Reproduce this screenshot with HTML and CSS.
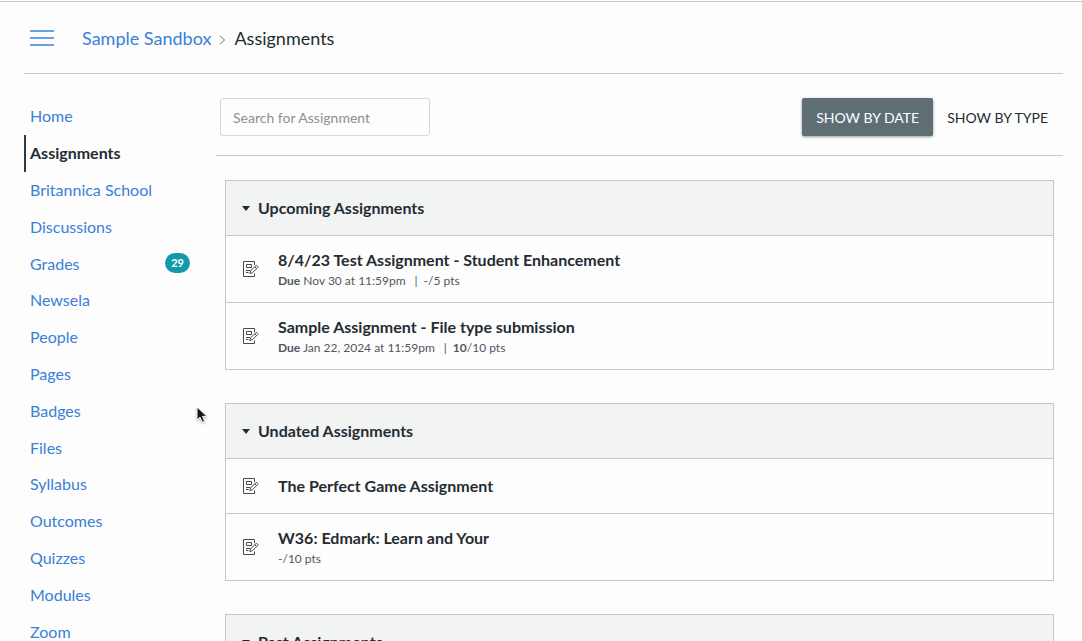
FILE: index.html
```
<!DOCTYPE html>
<html lang="en">
<head>
    <meta charset="UTF-8">
    <title>Sample Sandbox Assignments</title>
    <meta name="viewport" content="width=device-width, initial-scale=1.0">
    <link rel="stylesheet" href="styles.css">
</head>
<body>
    <!-- Shared icons -->
    <svg class="sprite" aria-hidden="true">
        <symbol id="icon-assignment" viewBox="0 0 17 16">
            <g fill="none" stroke="currentColor" stroke-width="1">
                <path d="M12.5 4V.5h-11v15h11V12.5"/>
                <path d="M4.5 3.5h5v3h-5zM4 9.5h4.500M4 11.5h2.500"/>
                <path d="M7.800 12.500l.8-2.700 5.300-5.100q.7-.6 1.400.1l.4.400q.6.7-.1 1.400l-5.200 5.200zM12.800 5.800l1.900 1.900"/>
            </g>
        </symbol>
    </svg>

    <!-- Breadcrumb header -->
    <header class="header">
        <button class="menu-button" type="button" aria-label="Toggle course navigation">
            <svg width="24" height="18" viewBox="0 0 24 18">
                <path d="M0 2h24M0 9h24M0 16h24" stroke="currentColor" stroke-width="1.5"/>
            </svg>
        </button>
        <nav class="breadcrumbs" aria-label="Breadcrumb">
            <a href="#">Sample Sandbox</a>
            <svg class="chevron" width="7" height="10" viewBox="0 0 7 10">
                <path d="M1 .8l4.600 4.200L1 9.200" fill="none" stroke="currentColor"/>
            </svg>
            <span>Assignments</span>
        </nav>
    </header>

    <div class="layout">
        <!-- Course navigation -->
        <nav class="course-nav" aria-label="Course">
            <a href="#">Home</a>
            <a href="#" class="active">Assignments</a>
            <a href="#">Britannica School</a>
            <a href="#">Discussions</a>
            <a href="#">Grades <span class="badge">29</span></a>
            <a href="#">Newsela</a>
            <a href="#">People</a>
            <a href="#">Pages</a>
            <a href="#">Badges</a>
            <a href="#">Files</a>
            <a href="#">Syllabus</a>
            <a href="#">Outcomes</a>
            <a href="#">Quizzes</a>
            <a href="#">Modules</a>
            <a href="#">Zoom</a>
        </nav>

        <main class="content">
            <div class="toolbar">
                <input class="search" type="text" placeholder="Search for Assignment" aria-label="Search for Assignment">
                <div class="view-toggle">
                    <button class="selected" type="button">SHOW BY DATE</button>
                    <button type="button">SHOW BY TYPE</button>
                </div>
            </div>

            <!-- Assignment groups -->
            <div class="groups">
                <section class="group">
                    <h2><button class="group-toggle" type="button">Upcoming Assignments</button></h2>
                    <ul>
                        <li>
                            <svg class="icon"><use href="#icon-assignment"/></svg>
                            <div>
                                <a href="#" class="title">8/4/23 Test Assignment - Student Enhancement</a>
                                <div class="meta"><span><b>Due</b> Nov 30 at 11:59pm</span><span class="score">-/5 pts</span></div>
                            </div>
                        </li>
                        <li>
                            <svg class="icon"><use href="#icon-assignment"/></svg>
                            <div>
                                <a href="#" class="title">Sample Assignment - File type submission</a>
                                <div class="meta"><span><b>Due</b> Jan 22, 2024 at 11:59pm</span><span class="score"><b>10</b>/10 pts</span></div>
                            </div>
                        </li>
                    </ul>
                </section>

                <section class="group">
                    <h2><button class="group-toggle" type="button">Undated Assignments</button></h2>
                    <ul>
                        <li>
                            <svg class="icon"><use href="#icon-assignment"/></svg>
                            <a href="#" class="title">The Perfect Game Assignment</a>
                        </li>
                        <li>
                            <svg class="icon"><use href="#icon-assignment"/></svg>
                            <div>
                                <a href="#" class="title">W36: Edmark: Learn and Your</a>
                                <div class="meta">-/10 pts</div>
                            </div>
                        </li>
                    </ul>
                </section>

                <section class="group">
                    <h2><button class="group-toggle" type="button">Past Assignments</button></h2>
                </section>
            </div>
        </main>
    </div>

    <!-- Mouse pointer -->
    <svg class="pointer" width="12" height="18" viewBox="0 0 12 18" aria-hidden="true">
        <path d="M1 1v13l3-2.800 2.200 5 2.400-1-2.100-4.900H11z" fill="#111820" stroke="#fff"/>
    </svg>
</body>
</html>
```
FILE: styles.css
```
/* ====== Base ====== */
* {
    box-sizing: border-box;
}
html {
    scrollbar-width: none;
}
body {
    margin: 0;
    padding: 1px 19px 0 24px;
    background: #fdfdfd;
    color: #2d3b45;
    font-family: Lato, "Open Sans", sans-serif;
    font-size: 16px;
    background-image: linear-gradient(#c5c7ca, #c5c7ca);
    background-size: 100% 1px;
    background-position: 0 1px;
    background-repeat: no-repeat;
}
a {
    color: #3a80d8;
    text-decoration: none;
}
button {
    font: inherit;
    color: inherit;
    background: none;
    border: 0;
    cursor: pointer;
}
.sprite {
    display: none;
}

/* ====== Header ====== */
.header {
    display: flex;
    align-items: center;
    gap: 28px;
    height: 73px;
    padding: 2px 0 0 6px;
    border-bottom: 1px solid #c5c7ca;
}
.menu-button {
    display: flex;
    padding: 0;
    color: #3a80d8;
}
.breadcrumbs {
    display: flex;
    align-items: baseline;
    gap: 8px;
    font-size: 18px;
    color: #242c32;
}
.chevron {
    color: #66707a;
}

/* ====== Layout ====== */
.layout {
    display: flex;
}
.course-nav {
    display: grid;
    grid-auto-rows: 1fr;
    flex: 0 0 192px;
    align-self: flex-start;
    min-height: 552px;
    margin-top: 24px;
}
.course-nav a {
    display: flex;
    align-items: center;
    justify-content: space-between;
    padding: 0 26px 1px 6px;
}
.course-nav .active {
    padding-left: 4px;
    border-left: 2px solid #2d3b45;
    color: #242c32;
    font-weight: bold;
}
.badge {
    padding: 0 6px;
    border-radius: 10px;
    background: #1399aa;
    color: #fff;
    font-size: 11px;
    font-weight: bold;
    line-height: 20px;
}
.content {
    flex: 1;
    min-width: 0;
}

/* ====== Toolbar ====== */
.toolbar {
    display: flex;
    align-items: center;
    justify-content: space-between;
    padding: 24px 1px 19px 4px;
    border-bottom: 1px solid #c5c7ca;
}
.search {
    width: 210px;
    height: 38px;
    padding: 0 12px;
    border: 1px solid #d3d7da;
    border-radius: 3px;
    background: #fdfdfd;
    color: #2d3b45;
    font: inherit;
    font-size: 14px;
}
.search::placeholder {
    color: #8b9094;
}
.view-toggle {
    display: flex;
}
.view-toggle button {
    height: 38px;
    padding: 0 14px;
    border-radius: 2px;
    color: #242c32;
    font-size: 14px;
}
.view-toggle .selected {
    background: #5f6e74;
    color: #fff;
    box-shadow: 0 1px 3px rgba(0, 0, 0, 0.4);
}

/* ====== Assignment groups ====== */
.groups {
    display: grid;
    gap: 33px;
    padding: 24px 9px;
}
.group {
    border: 1px solid #c5c5cc;
}
.group h2 {
    margin: 0;
    background: #f2f3f3;
    font-size: 16px;
}
.group-toggle {
    display: flex;
    align-items: center;
    gap: 8px;
    width: 100%;
    height: 54px;
    padding: 0 16px 2px;
    text-align: left;
    color: #242c32;
}
.group-toggle::before {
    content: "";
    margin-top: 2px;
    border: 4px solid transparent;
    border-top: 5px solid currentColor;
    border-bottom: 0;
}
.group ul {
    margin: 0;
    padding: 0;
    list-style: none;
}
.group li {
    display: flex;
    align-items: center;
    gap: 19px;
    min-height: 55px;
    padding: 12px 16px;
    border-top: 1px solid #c5c5cc;
}
.icon {
    width: 17px;
    height: 16px;
    color: #444c52;
}
.title {
    display: block;
    color: #242c32;
    font-weight: bold;
    line-height: 24px;
}
.meta {
    display: flex;
    color: #50585f;
    font-size: 12px;
    line-height: 18px;
}
.score::before {
    content: "|";
    margin: 0 6px 0 9px;
}

/* ====== Pointer ====== */
.pointer {
    position: absolute;
    left: 196px;
    top: 406px;
    filter: drop-shadow(0 1px 1px rgba(0, 0, 0, 0.3));
}
```
